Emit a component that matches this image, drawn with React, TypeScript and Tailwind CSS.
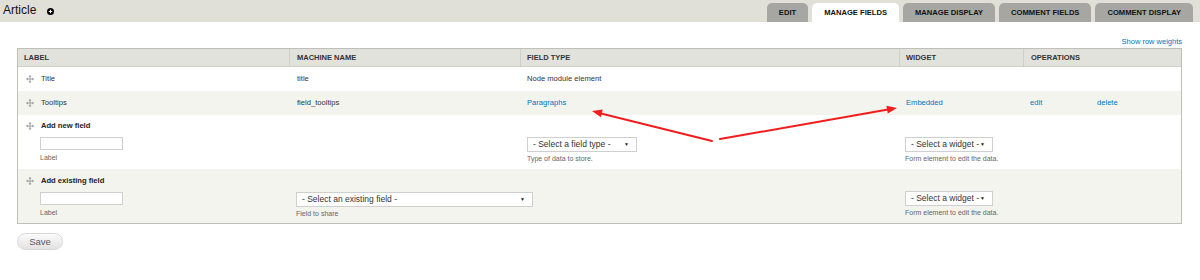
import React from "react";

const cols = "grid grid-cols-[271px_231px_379px_124px_158px]";

function Drag() {
  return (
    <svg width="8" height="8" viewBox="0 0 8 8" className="shrink-0">
      <g stroke="#a0a0a0" strokeWidth="1" fill="none">
        <line x1="4" y1="0.5" x2="4" y2="7.5" />
        <line x1="0.5" y1="4" x2="7.5" y2="4" />
      </g>
      <g fill="#a0a0a0">
        <polygon points="4,0 2.5,1.8 5.5,1.8" />
        <polygon points="4,8 2.5,6.2 5.5,6.2" />
        <polygon points="0,4 1.8,2.5 1.8,5.5" />
        <polygon points="8,4 6.2,2.5 6.2,5.5" />
      </g>
    </svg>
  );
}

function Select({ text, w }: { text: string; w: string }) {
  return (
    <div
      className={`${w} h-[15px] bg-white border border-[#cfcfcf] flex items-center justify-between pl-[5px] pr-[7px] text-[8.5px] leading-none text-[#333]`}
    >
      <span className="text-[#333]">{text}</span>
      <span className="text-[5px] text-[#222]">▼</span>
    </div>
  );
}

function Desc({ children }: { children: React.ReactNode }) {
  return <div className="text-[7px] leading-[10px] text-[#666]">{children}</div>;
}

export default function App() {
  return (
    <div className="relative w-[1200px] h-[280px] bg-white font-['Liberation_Sans',Arial,sans-serif] text-[#333] overflow-hidden">
      {/* branding bar */}
      <div className="h-[22px] bg-[#e0e0d8] flex items-end justify-between pr-[7px]">
        <div className="self-stretch flex items-center pl-[3px] gap-[11px] pb-[2px]">
          <span className="text-[12px] leading-none text-[#111]">Article</span>
          <span className="w-[7px] h-[7px] rounded-full bg-black flex items-center justify-center mt-[2px]">
            <svg width="5" height="5" viewBox="0 0 5 5">
              <path d="M2.5 0.8V4.2M0.8 2.5H4.2" stroke="white" strokeWidth="1.1" />
            </svg>
          </span>
        </div>
        <div className="flex gap-[4px]">
          {["EDIT", "MANAGE FIELDS", "MANAGE DISPLAY", "COMMENT FIELDS", "COMMENT DISPLAY"].map((t) => (
            <div
              key={t}
              className={`h-[19px] px-[12px] rounded-t-[5px] flex items-center text-[7.6px] font-bold leading-none ${
                t === "MANAGE FIELDS" ? "bg-white text-[#111]" : "bg-[#a6a7a2] text-[#111]"
              }`}
            >
              {t}
            </div>
          ))}
        </div>
      </div>

      <div className="px-[17px]">
        <div className="pt-[15px] h-[26px] flex justify-end pr-[1px]">
          <span className="text-[7.5px] leading-[10px] text-[#0074bd]">Show row weights</span>
        </div>

        {/* table */}
        <div className="w-[1165px] border border-[#bebfb9]">
          <div className={`${cols} h-[18px] bg-[#e1e2dc] border-b border-[#cfd0ca] text-[7.5px] font-bold text-[#333]`}>
            <div className="flex items-center pl-[6px]">LABEL</div>
            <div className="flex items-center pl-[7px] border-l border-[#cfd0ca]">MACHINE NAME</div>
            <div className="flex items-center pl-[6px] border-l border-[#cfd0ca]">FIELD TYPE</div>
            <div className="flex items-center pl-[6px] border-l border-[#cfd0ca]">WIDGET</div>
            <div className="flex items-center pl-[7px] border-l border-[#cfd0ca]">OPERATIONS</div>
          </div>

          <div className={`${cols} h-[24px] bg-white text-[7.6px] text-[#333]`}>
            <div className="flex items-center pl-[8px] gap-[7px]">
              <Drag />
              <span className="text-[#333]">Title</span>
            </div>
            <div className="flex items-center pl-[8px] text-[#333]">title</div>
            <div className="flex items-center pl-[7px] text-[#333]">Node module element</div>
            <div />
            <div />
          </div>

          <div className={`${cols} h-[24px] bg-[#f3f4ee] text-[7.6px] text-[#333]`}>
            <div className="flex items-center pl-[8px] gap-[7px]">
              <Drag />
              <span className="text-[#333]">Tooltips</span>
            </div>
            <div className="flex items-center pl-[8px] text-[#333]">field_tooltips</div>
            <div className="flex items-center pl-[7px] text-[#0074bd]">Paragraphs</div>
            <div className="flex items-center pl-[7px] text-[#0074bd]">Embedded</div>
            <div className="flex items-center text-[#0074bd]">
              <span className="w-[67px] pl-[7px]">edit</span>
              <span className="pl-[7px]">delete</span>
            </div>
          </div>

          <div className={`${cols} h-[54px] bg-white text-[7.6px] text-[#333]`}>
            <div className="pl-[8px] pt-[6px]">
              <div className="flex items-center gap-[7px] h-[10px]">
                <Drag />
                <span className="font-bold text-[#222]">Add new field</span>
              </div>
              <div className="ml-[14px] mt-[6px] w-[83px] h-[13px] bg-white border border-[#cfcfcf]" />
              <div className="ml-[14px] mt-[3px]">
                <Desc>Label</Desc>
              </div>
            </div>
            <div />
            <div className="pl-[7px] pt-[22px]">
              <Select text="- Select a field type -" w="w-[110px]" />
              <div className="mt-[2px]">
                <Desc>Type of data to store.</Desc>
              </div>
            </div>
            <div className="pl-[6px] pt-[22px]">
              <Select text="- Select a widget -" w="w-[88px]" />
              <div className="mt-[2px]">
                <Desc>Form element to edit the data.</Desc>
              </div>
            </div>
            <div />
          </div>

          <div className={`${cols} h-[54px] bg-[#f3f4ee] text-[7.6px] text-[#333]`}>
            <div className="pl-[8px] pt-[7px]">
              <div className="flex items-center gap-[7px] h-[10px]">
                <Drag />
                <span className="font-bold text-[#222]">Add existing field</span>
              </div>
              <div className="ml-[14px] mt-[6px] w-[83px] h-[13px] bg-white border border-[#cfcfcf]" />
              <div className="ml-[14px] mt-[3px]">
                <Desc>Label</Desc>
              </div>
            </div>
            <div className="pl-[7px] pt-[23px]">
              <Select text="- Select an existing field -" w="w-[237px]" />
              <div className="mt-[2px]">
                <Desc>Field to share</Desc>
              </div>
            </div>
            <div />
            <div className="pl-[6px] pt-[22px]">
              <Select text="- Select a widget -" w="w-[88px]" />
              <div className="mt-[2px]">
                <Desc>Form element to edit the data.</Desc>
              </div>
            </div>
            <div />
          </div>
        </div>

        <div className="mt-[9px]">
          <button className="w-[46px] h-[17px] rounded-full border border-[#d8d8d8] bg-gradient-to-b from-[#fbfbfb] to-[#e2e2e2] text-[9.5px] leading-none text-[#5a5a5a] flex items-center justify-center">
            Save
          </button>
        </div>
      </div>

      {/* annotation arrows */}
      <svg className="absolute left-0 top-0 pointer-events-none" width="1200" height="280">
        <g stroke="#f21d1d" strokeWidth="2" strokeLinecap="round">
          <line x1="712" y1="141" x2="601" y2="113.5" />
          <line x1="720" y1="139" x2="888" y2="109.6" />
        </g>
        <g fill="#f21d1d">
          <polygon points="592,111 602.6,109.6 600.9,117.2" />
          <polygon points="897,108 887.8,113.5 886.4,105.8" />
        </g>
      </svg>
    </div>
  );
}
